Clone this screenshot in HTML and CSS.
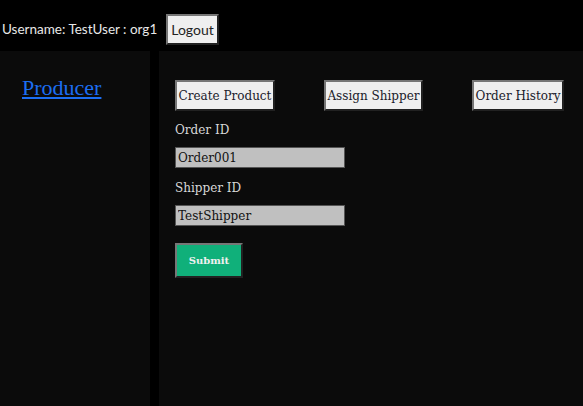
FILE: index.html
```html
<!DOCTYPE html>
<html>
<head>
<meta charset="utf-8">
<link rel="stylesheet" href="styles.css">
</head>
<body>
<header class="topbar">
  <span class="user">Username: TestUser : org1</span>
  <button class="logout">Logout</button>
</header>
<div class="layout">
  <aside class="sidebar">
    <a class="nav-link" href="#">Producer</a>
  </aside>
  <main class="main">
    <div class="actions">
      <button class="tab-btn">Create Product</button>
      <button class="tab-btn">Assign Shipper</button>
      <button class="tab-btn">Order History</button>
    </div>
    <form class="form">
      <label class="field-label">Order ID</label>
      <input class="field-input" type="text" value="Order001">
      <label class="field-label">Shipper ID</label>
      <input class="field-input" type="text" value="TestShipper">
      <button type="button" class="submit">Submit</button>
    </form>
  </main>
</div>
</body>
</html>
```
FILE: styles.css
```css
html, body {
  margin: 0;
  padding: 0;
  background: #000;
  height: 100%;
}
body {
  display: flex;
  flex-direction: column;
  font-family: "Liberation Serif", serif;
}
.topbar {
  display: flex;
  align-items: center;
  height: 51px;
  padding: 11px 0 4px 2px;
  box-sizing: border-box;
}
.user {
  font-family: "Lato", sans-serif;
  font-size: 13.5px;
  color: #e8e8e8;
  margin-right: 9px;
}
.logout {
  font-family: "Lato", sans-serif;
  font-size: 14px;
  color: #222;
  background: #efefef;
  border: 2px outset #767676;
  height: 31px;
  padding: 0 3px;
  margin: 0;
}
.layout {
  flex: 1;
  display: flex;
  gap: 9px;
}
.sidebar {
  width: 150px;
  background: #0b0b0b;
  padding: 24px 0 0 22px;
  box-sizing: border-box;
}
.nav-link {
  font-family: "Liberation Serif", serif;
  font-size: 22px;
  color: #1c6ef2;
  text-decoration: underline;
}
.main {
  flex: 1;
  background: #0b0b0b;
  padding: 29px 19px 0 16px;
}
.actions {
  display: flex;
  justify-content: space-between;
  margin-bottom: 12px;
}
.tab-btn {
  font-family: "DejaVu Serif", serif;
  font-size: 12px;
  color: #1a1a2a;
  background: #efefef;
  border: 2px outset #767676;
  height: 31px;
  padding: 0 1.5px;
  margin: 0;
}
.form {
  display: flex;
  flex-direction: column;
  align-items: flex-start;
}
.field-label {
  font-family: "DejaVu Serif", serif;
  font-size: 12px;
  color: #d8d8d8;
  margin-bottom: 10px;
}
.field-input {
  font-family: "DejaVu Serif", serif;
  font-size: 12px;
  color: #111;
  background: #c0c0c0;
  border: 1px solid #555;
  width: 170px;
  height: 21px;
  box-sizing: border-box;
  padding: 0 2px;
  margin: 0 0 13px 0;
}
.submit {
  font-family: "DejaVu Serif", serif;
  font-size: 10px;
  font-weight: bold;
  color: #f0f0f0;
  background: #10b07a;
  border: 2px outset #767676;
  width: 68px;
  height: 35px;
  margin-top: 4px;
}
```
